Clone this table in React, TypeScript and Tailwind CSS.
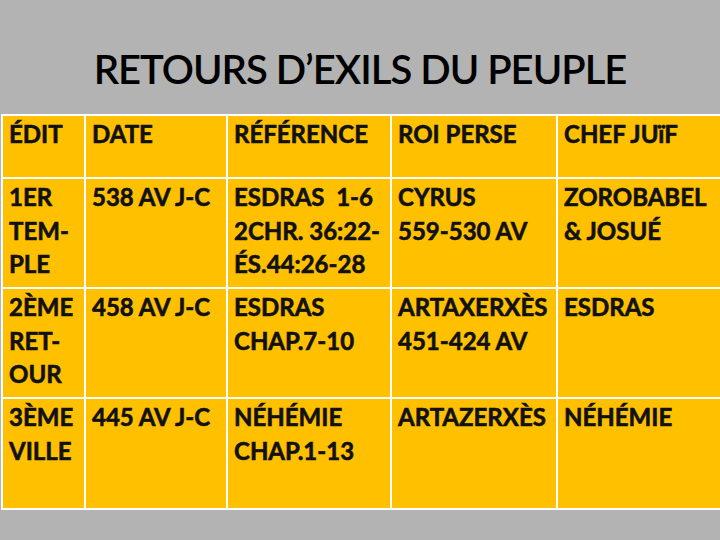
import React from "react";

const cells: string[][] = [
  ["ÉDIT", "DATE", "RÉFÉRENCE", "ROI PERSE", "CHEF JUïF"],
  ["1ER\nTEM-\nPLE", "538 AV J-C", "ESDRAS  1-6\n2CHR. 36:22-\nÉS.44:26-28", "CYRUS\n559-530 AV", "ZOROBABEL\n& JOSUÉ"],
  ["2ÈME\nRET-\nOUR", "458 AV J-C", "ESDRAS\nCHAP.7-10", "ARTAXERXÈS\n451-424 AV", "ESDRAS"],
  ["3ÈME\nVILLE", "445 AV J-C", "NÉHÉMIE\nCHAP.1-13", "ARTAZERXÈS", "NÉHÉMIE"],
];

export default function App() {
  return (
    <div className="w-[720px] h-[540px] overflow-hidden bg-[#b3b3b3]">
      <div className="h-[114px] flex justify-center pt-[44px]">
        <h1
          className="text-[40px] leading-[50px] font-semibold tracking-[-1px] text-black"
          style={{ fontFamily: "Lato, 'Liberation Sans', sans-serif" }}
        >
          RETOURS D’EXILS DU PEUPLE
        </h1>
      </div>
      <div
        className="ml-[1px] w-[760px] bg-white pt-[2px] pl-[2px] pb-[2px] grid grid-cols-[81px_140px_162px_164px_200px] grid-rows-[61px_108px_108px_109px] gap-[2px]"
        style={{ fontFamily: "Lato, 'Liberation Sans', sans-serif" }}
      >
        {cells.flat().map((t, i) => (
          <div
            key={i}
            className="bg-[#ffc000] pl-[6px] pt-[1px] text-[24px] leading-[33.5px] font-bold text-[#111] whitespace-pre [-webkit-text-stroke:0.6px_#111]"
          >
            {t}
          </div>
        ))}
      </div>
    </div>
  );
}
